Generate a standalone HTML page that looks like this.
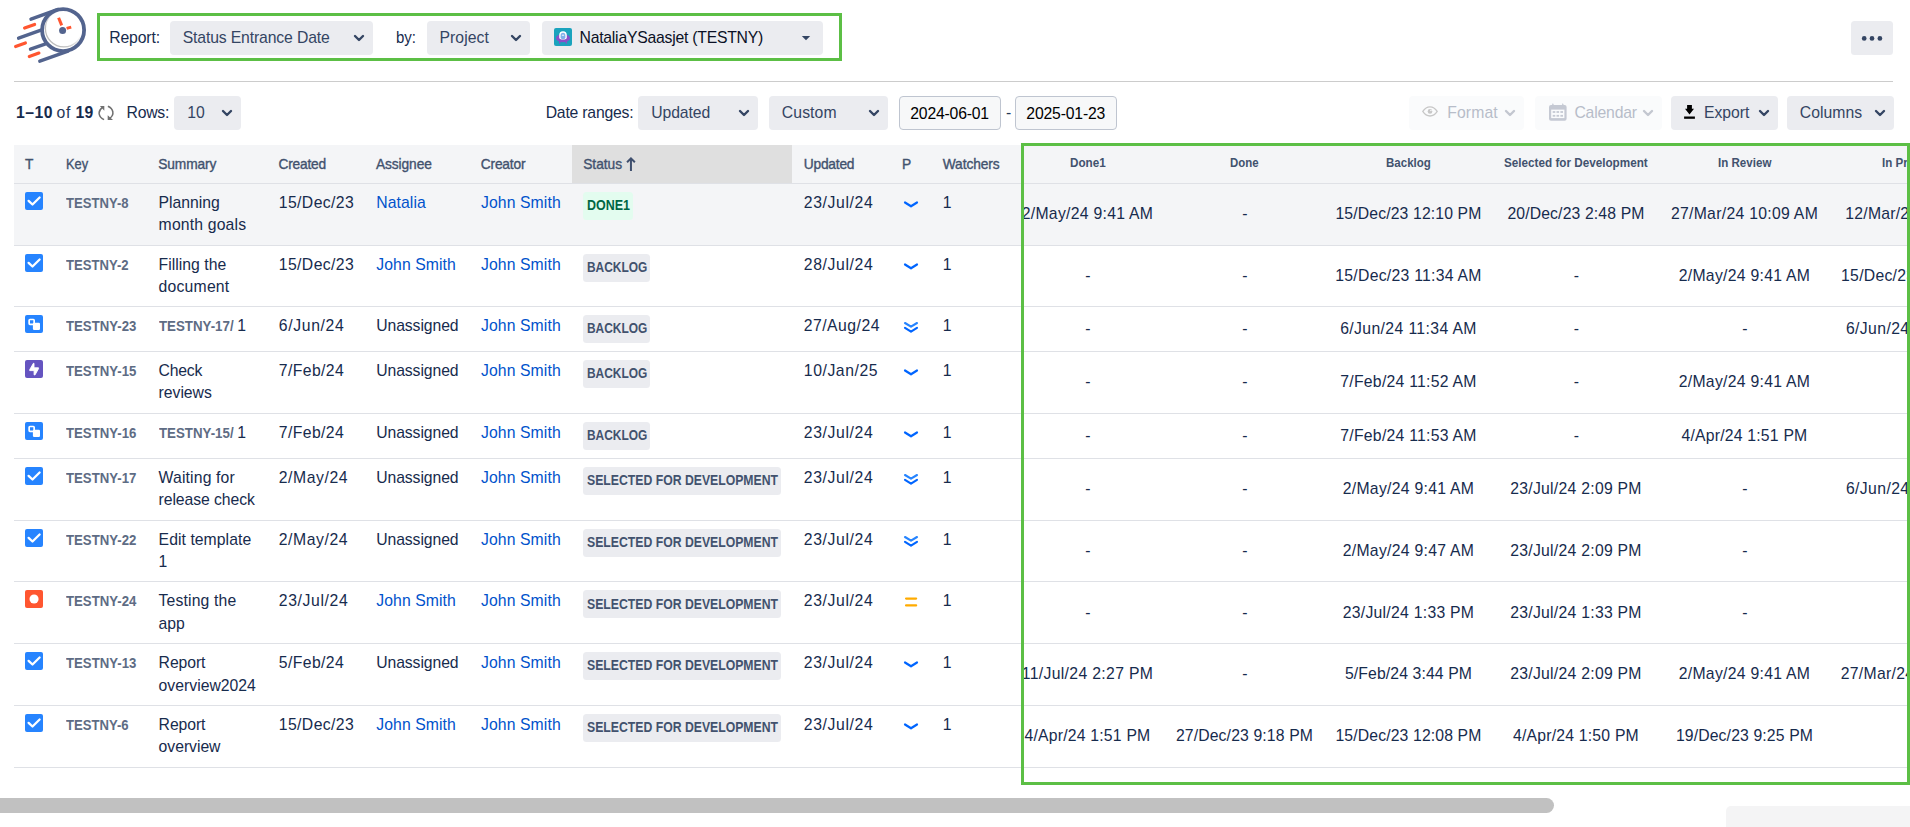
<!DOCTYPE html>
<html lang="en"><head><meta charset="utf-8"><title>Status Entrance Date report</title>
<style>
html,body{margin:0;padding:0;background:#fff;}
body{width:1910px;height:827px;overflow:hidden;position:relative;font-family:"Liberation Sans", sans-serif;}
span{font-family:inherit}
</style></head><body>
<div class="logo">
<svg style="position:absolute;left:0px;top:0px" width="96" height="70" viewBox="0 0 96 70">
<defs><linearGradient id="lg" x1="1" y1="0" x2="0" y2="1"><stop offset="0.35" stop-color="#bdbdbd" stop-opacity="0"/><stop offset="0.75" stop-color="#bdbdbd" stop-opacity="1"/></linearGradient></defs>
<g fill="none" stroke-linecap="round">
<g stroke="#53648e" stroke-width="3.4">
<line x1="31" y1="19.2" x2="58" y2="9.4"/>
<line x1="18.6" y1="38.2" x2="41" y2="30.2"/>
<line x1="30.5" y1="49.2" x2="45" y2="44.2"/>
<line x1="39.8" y1="61.2" x2="68" y2="51.2"/>
</g>
<g stroke="#ff5630" stroke-width="3.2">
<line x1="24.6" y1="28" x2="34.6" y2="24.5"/>
<line x1="15.6" y1="46.5" x2="25.4" y2="43"/>
<line x1="29.3" y1="56.5" x2="38.9" y2="53.1"/>
</g>
<circle cx="63.1" cy="30.05" r="20" fill="#fff" stroke="none"/>
<circle cx="63.9" cy="28.4" r="18.5" stroke="url(#lg)" stroke-width="1.3"/>
<circle cx="63.1" cy="30.05" r="21" stroke="#53648e" stroke-width="3.8"/>
<line x1="58.6" y1="17.8" x2="61.7" y2="25.4" stroke="#ff5630" stroke-width="3" stroke-linecap="butt"/>
<line x1="66.6" y1="28.4" x2="71.2" y2="27.1" stroke="#ff5630" stroke-width="3" stroke-linecap="butt"/>
<circle cx="62.6" cy="30.5" r="3.5" fill="#53648e" stroke="none"/>
</g></svg>
</div>
<div class="toolbar report-selectors">
<div style="position:absolute;left:170px;top:21px;width:203px;height:34px;background:#ebecf0;border-radius:4px;"></div>
<svg style="position:absolute;left:350.5px;top:29.9px" width="16" height="16" viewBox="0 0 16 16"><path d="M4 6.0 L8 10.0 L12 6.0" fill="none" stroke="#344563" stroke-width="2.4" stroke-linecap="round" stroke-linejoin="round"/></svg>
<div style="position:absolute;left:427px;top:21px;width:103px;height:34px;background:#ebecf0;border-radius:4px;"></div>
<svg style="position:absolute;left:508px;top:29.9px" width="16" height="16" viewBox="0 0 16 16"><path d="M4 6.0 L8 10.0 L12 6.0" fill="none" stroke="#344563" stroke-width="2.4" stroke-linecap="round" stroke-linejoin="round"/></svg>
<div style="position:absolute;left:542px;top:21px;width:281px;height:34px;background:#ebecf0;border-radius:4px;"></div>
<svg style="position:absolute;left:554px;top:28.3px" width="18" height="18" viewBox="0 0 18 18"><rect width="18" height="18" rx="2" fill="#1aa3bd"/>
<ellipse cx="9" cy="10.2" rx="7" ry="4" fill="#8a4fc9"/>
<rect x="5" y="13.2" width="1.4" height="2.4" fill="#8a4fc9"/><rect x="11.6" y="13.2" width="1.4" height="2.4" fill="#8a4fc9"/>
<path d="M5.2 9.6 V7 a3.8 3.8 0 0 1 7.6 0 V9.6 a3.8 2 0 0 1 -7.6 0Z" fill="#fff"/>
<path d="M6.6 9.8 V7.4 a2.4 2.6 0 0 1 4.8 0 V9.8 a2.4 1.4 0 0 1 -4.8 0Z" fill="#7fb0ea"/>
<ellipse cx="9" cy="7.3" rx="1.3" ry="0.8" fill="#dfeafb"/></svg>
<svg style="position:absolute;left:800px;top:32px" width="12" height="12" viewBox="0 0 12 12"><path d="M1.8 4 H10.2 L6 8.3Z" fill="#344563"/></svg>
<div style="position:absolute;left:97px;top:13px;width:739px;height:42px;background:transparent;border-radius:0px;border:3px solid #5cbf45;"></div>
<div style="position:absolute;left:1851px;top:21px;width:42px;height:34px;background:#ebecf0;border-radius:3.5px;"></div>
<svg style="position:absolute;left:1858px;top:33px" width="28" height="11" viewBox="0 0 28 11"><circle cx="6.2" cy="5.4" r="2.35" fill="#344563"/><circle cx="14" cy="5.4" r="2.35" fill="#344563"/><circle cx="21.9" cy="5.4" r="2.35" fill="#344563"/></svg>
<div style="position:absolute;left:14px;top:81px;width:1879px;height:1px;background:#cccccc;border-radius:0px;"></div>
<span id="t0" style="position:absolute;white-space:pre;line-height:22px;font-size:15.75px;font-weight:400;color:#172b4d;top:27px;letter-spacing:-0.154px;left:109.30px;">Report:</span>
<span id="t1" style="position:absolute;white-space:pre;line-height:22px;font-size:15.75px;font-weight:400;color:#344563;top:27px;letter-spacing:-0.138px;left:182.70px;">Status Entrance Date</span>
<span id="t2" style="position:absolute;white-space:pre;line-height:22px;font-size:15.75px;font-weight:400;color:#172b4d;top:27px;transform:scaleX(0.9532);transform-origin:0 50%;left:396.20px;">by:</span>
<span id="t3" style="position:absolute;white-space:pre;line-height:22px;font-size:15.75px;font-weight:400;color:#344563;top:27px;letter-spacing:0.085px;left:439.40px;">Project</span>
<span id="t4" style="position:absolute;white-space:pre;line-height:22px;font-size:15.75px;font-weight:400;color:#0a1025;top:27px;letter-spacing:-0.232px;left:579.50px;">NataliaYSaasjet (TESTNY)</span>
</div>
<div class="toolbar table-controls">
<svg style="position:absolute;left:97.5px;top:105px" width="17" height="16" viewBox="0 0 17 16"><g fill="none" stroke="#707070" stroke-width="1.5">
<path d="M6.1 14.6 C0.6 12.4 -0.8 6.2 4.3 2.6"/>
<path d="M9.9 1.2 C15.6 3.6 16.6 9.6 12 13.2"/>
</g>
<path d="M1.9 1.1 H6.3 V5.7Z" fill="#707070"/>
<path d="M15 15 H9.7 V10.3Z" fill="#707070"/></svg>
<div style="position:absolute;left:174px;top:96px;width:67px;height:34px;background:#ebecf0;border-radius:4px;"></div>
<svg style="position:absolute;left:218.8px;top:105.2px" width="16" height="16" viewBox="0 0 16 16"><path d="M4 6.0 L8 10.0 L12 6.0" fill="none" stroke="#344563" stroke-width="2.4" stroke-linecap="round" stroke-linejoin="round"/></svg>
<div style="position:absolute;left:638px;top:96px;width:120px;height:34px;background:#ebecf0;border-radius:4px;"></div>
<svg style="position:absolute;left:735.5px;top:105.2px" width="16" height="16" viewBox="0 0 16 16"><path d="M4 6.0 L8 10.0 L12 6.0" fill="none" stroke="#344563" stroke-width="2.4" stroke-linecap="round" stroke-linejoin="round"/></svg>
<div style="position:absolute;left:769px;top:96px;width:119px;height:34px;background:#ebecf0;border-radius:4px;"></div>
<svg style="position:absolute;left:866px;top:105.2px" width="16" height="16" viewBox="0 0 16 16"><path d="M4 6.0 L8 10.0 L12 6.0" fill="none" stroke="#344563" stroke-width="2.4" stroke-linecap="round" stroke-linejoin="round"/></svg>
<div style="position:absolute;left:899px;top:96px;width:100px;height:32px;background:#f7f8f9;border-radius:4px;border:1px solid #bfc5d0;"></div>
<div style="position:absolute;left:1015px;top:96px;width:100px;height:32px;background:#f7f8f9;border-radius:4px;border:1px solid #bfc5d0;"></div>
<div style="position:absolute;left:1409px;top:96px;width:115px;height:34px;background:#fafbfc;border-radius:4px;"></div>
<svg style="position:absolute;left:1422px;top:106.3px" width="16" height="11" viewBox="0 0 16 11"><path d="M0.8 5.4 C3.4 1.4 6 0.8 8 0.8 C10 0.8 12.6 1.4 15.2 5.4 C12.6 9.4 10 10 8 10 C6 10 3.4 9.4 0.8 5.4Z" fill="none" stroke="#c7c7c7" stroke-width="1.3"/>
<circle cx="8" cy="5.4" r="2.3" fill="#c7c7c7"/><circle cx="8.9" cy="4.5" r="0.8" fill="#fafbfc"/></svg>
<svg style="position:absolute;left:1501.6px;top:105.3px" width="16" height="16" viewBox="0 0 16 16"><path d="M4 6.0 L8 10.0 L12 6.0" fill="none" stroke="#c3c7d0" stroke-width="2.4" stroke-linecap="round" stroke-linejoin="round"/></svg>
<div style="position:absolute;left:1535px;top:96px;width:127px;height:34px;background:#fafbfc;border-radius:4px;"></div>
<svg style="position:absolute;left:1548.6px;top:103px" width="18" height="18" viewBox="0 0 18 18"><path d="M2 2 H3 L3.9 0 L4.8 2 H12.9 L13.8 0 L14.7 2 H15.6 a2 2 0 0 1 2 2 V15.8 a2 2 0 0 1 -2 2 H2 a2 2 0 0 1 -2 -2 V4 a2 2 0 0 1 2 -2Z" fill="#c5c9d3"/>
<rect x="2.2" y="6.6" width="13.2" height="8.5" fill="#fafbfc"/>
<g fill="#c5c9d3"><rect x="3.7" y="8.1" width="2.6" height="1.8"/><rect x="7.5" y="8.1" width="2.6" height="1.8"/><rect x="11.4" y="8.1" width="2.6" height="1.8"/>
<rect x="3.7" y="11.9" width="2.6" height="1.8"/><rect x="7.5" y="11.9" width="2.6" height="1.8"/><rect x="11.4" y="11.9" width="2.6" height="1.8"/></g></svg>
<svg style="position:absolute;left:1640px;top:105.3px" width="16" height="16" viewBox="0 0 16 16"><path d="M4 6.0 L8 10.0 L12 6.0" fill="none" stroke="#c3c7d0" stroke-width="2.4" stroke-linecap="round" stroke-linejoin="round"/></svg>
<div style="position:absolute;left:1671px;top:96px;width:107px;height:34px;background:#ebecf0;border-radius:4px;"></div>
<svg style="position:absolute;left:1684px;top:105.4px" width="11" height="14" viewBox="0 0 11 14"><path d="M3.1 0 H7.9 V3.7 H10 L5.5 9.5 L1 3.7 H3.1Z" fill="#000"/><rect x="0.1" y="11.5" width="10.8" height="2.3" fill="#000"/></svg>
<svg style="position:absolute;left:1755.8px;top:105.1px" width="16" height="16" viewBox="0 0 16 16"><path d="M4 6.0 L8 10.0 L12 6.0" fill="none" stroke="#344563" stroke-width="2.4" stroke-linecap="round" stroke-linejoin="round"/></svg>
<div style="position:absolute;left:1787px;top:96px;width:107px;height:34px;background:#ebecf0;border-radius:4px;"></div>
<svg style="position:absolute;left:1871.8px;top:105.1px" width="16" height="16" viewBox="0 0 16 16"><path d="M4 6.0 L8 10.0 L12 6.0" fill="none" stroke="#344563" stroke-width="2.4" stroke-linecap="round" stroke-linejoin="round"/></svg>
<span id="t5" style="position:absolute;white-space:pre;line-height:22px;font-size:15.75px;font-weight:700;color:#172b4d;top:102px;letter-spacing:0.500px;left:16.10px;">1–10</span>
<span id="t6" style="position:absolute;white-space:pre;line-height:22px;font-size:15.75px;font-weight:400;color:#253858;top:102px;letter-spacing:0.664px;left:56.50px;">of</span>
<span id="t7" style="position:absolute;white-space:pre;line-height:22px;font-size:15.75px;font-weight:700;color:#172b4d;top:102px;letter-spacing:0.273px;left:75.50px;">19</span>
<span id="t8" style="position:absolute;white-space:pre;line-height:22px;font-size:15.75px;font-weight:400;color:#172b4d;top:102px;letter-spacing:-0.259px;left:126.60px;">Rows:</span>
<span id="t9" style="position:absolute;white-space:pre;line-height:22px;font-size:15.75px;font-weight:400;color:#344563;top:102px;letter-spacing:0.094px;left:187.20px;">10</span>
<span id="t10" style="position:absolute;white-space:pre;line-height:22px;font-size:15.75px;font-weight:400;color:#172b4d;top:102px;letter-spacing:-0.203px;left:545.70px;">Date ranges:</span>
<span id="t11" style="position:absolute;white-space:pre;line-height:22px;font-size:15.75px;font-weight:400;color:#344563;top:102px;letter-spacing:-0.094px;left:651.20px;">Updated</span>
<span id="t12" style="position:absolute;white-space:pre;line-height:22px;font-size:15.75px;font-weight:400;color:#344563;top:102px;letter-spacing:0.099px;left:781.80px;">Custom</span>
<span id="t13" style="position:absolute;white-space:pre;line-height:22px;font-size:15.75px;font-weight:400;color:#000;top:103px;letter-spacing:-0.198px;left:910.30px;">2024-06-01</span>
<span id="t14" style="position:absolute;white-space:pre;line-height:22px;font-size:15.75px;font-weight:400;color:#253858;top:102px;left:1005.90px;">-</span>
<span id="t15" style="position:absolute;white-space:pre;line-height:22px;font-size:15.75px;font-weight:400;color:#000;top:103px;letter-spacing:-0.168px;left:1026.30px;">2025-01-23</span>
<span id="t16" style="position:absolute;white-space:pre;line-height:22px;font-size:15.75px;font-weight:400;color:#b7bdc9;top:102px;letter-spacing:0.086px;left:1447.30px;">Format</span>
<span id="t17" style="position:absolute;white-space:pre;line-height:22px;font-size:15.75px;font-weight:400;color:#b7bdc9;top:102px;letter-spacing:-0.178px;left:1574.40px;">Calendar</span>
<span id="t18" style="position:absolute;white-space:pre;line-height:22px;font-size:15.75px;font-weight:400;color:#344563;top:102px;letter-spacing:-0.010px;left:1703.90px;">Export</span>
<span id="t19" style="position:absolute;white-space:pre;line-height:22px;font-size:15.75px;font-weight:400;color:#344563;top:102px;letter-spacing:0.033px;left:1799.80px;">Columns</span>
</div>
<div class="issue-table" role="table">
<div class="thead" role="row">
<div style="position:absolute;left:14px;top:145px;width:1896px;height:38px;background:#f4f5f7;border-radius:0px;"></div>
<div style="position:absolute;left:572px;top:145px;width:220px;height:39px;background:#dfdfdf;border-radius:0px;"></div>
<div style="position:absolute;left:14px;top:184px;width:1896px;height:61px;background:#f4f5f7;border-radius:0px;"></div>
<div style="position:absolute;left:14px;top:183px;width:1896px;height:1px;background:#dfe1e6;border-radius:0px;"></div>
<div style="position:absolute;left:14px;top:245px;width:1896px;height:1px;background:#dfe1e6;border-radius:0px;"></div>
<div style="position:absolute;left:14px;top:306px;width:1896px;height:1px;background:#dfe1e6;border-radius:0px;"></div>
<div style="position:absolute;left:14px;top:351px;width:1896px;height:1px;background:#dfe1e6;border-radius:0px;"></div>
<div style="position:absolute;left:14px;top:413px;width:1896px;height:1px;background:#dfe1e6;border-radius:0px;"></div>
<div style="position:absolute;left:14px;top:458px;width:1896px;height:1px;background:#dfe1e6;border-radius:0px;"></div>
<div style="position:absolute;left:14px;top:520px;width:1896px;height:1px;background:#dfe1e6;border-radius:0px;"></div>
<div style="position:absolute;left:14px;top:581px;width:1896px;height:1px;background:#dfe1e6;border-radius:0px;"></div>
<div style="position:absolute;left:14px;top:643px;width:1896px;height:1px;background:#dfe1e6;border-radius:0px;"></div>
<div style="position:absolute;left:14px;top:705px;width:1896px;height:1px;background:#dfe1e6;border-radius:0px;"></div>
<div style="position:absolute;left:14px;top:767px;width:1896px;height:1px;background:#dfe1e6;border-radius:0px;"></div>
<svg style="position:absolute;left:624px;top:155px" width="14" height="18" viewBox="0 0 14 18"><path d="M6.95 15.9 V3.4 M3.05 7.3 L6.95 3.4 L10.85 7.3" fill="none" stroke="#3f4f6e" stroke-width="2" stroke-linecap="butt" stroke-linejoin="miter"/></svg>
<span id="t20" style="position:absolute;white-space:pre;line-height:22px;font-size:13.75px;font-weight:400;color:#42526e;top:154px;left:25.10px;-webkit-text-stroke:0.35px #42526e;">T</span>
<span id="t21" style="position:absolute;white-space:pre;line-height:22px;font-size:13.75px;font-weight:400;color:#42526e;top:154px;transform:scaleX(0.9334);transform-origin:0 50%;left:65.70px;-webkit-text-stroke:0.35px #42526e;">Key</span>
<span id="t22" style="position:absolute;white-space:pre;line-height:22px;font-size:13.75px;font-weight:400;color:#42526e;top:154px;letter-spacing:-0.121px;left:158.30px;-webkit-text-stroke:0.35px #42526e;">Summary</span>
<span id="t23" style="position:absolute;white-space:pre;line-height:22px;font-size:13.75px;font-weight:400;color:#42526e;top:154px;letter-spacing:-0.230px;left:278.50px;-webkit-text-stroke:0.35px #42526e;">Created</span>
<span id="t24" style="position:absolute;white-space:pre;line-height:22px;font-size:13.75px;font-weight:400;color:#42526e;top:154px;letter-spacing:-0.082px;left:375.90px;-webkit-text-stroke:0.35px #42526e;">Assignee</span>
<span id="t25" style="position:absolute;white-space:pre;line-height:22px;font-size:13.75px;font-weight:400;color:#42526e;top:154px;letter-spacing:-0.158px;left:480.70px;-webkit-text-stroke:0.35px #42526e;">Creator</span>
<span id="t26" style="position:absolute;white-space:pre;line-height:22px;font-size:13.75px;font-weight:400;color:#42526e;top:154px;letter-spacing:-0.013px;left:583.20px;-webkit-text-stroke:0.35px #42526e;">Status</span>
<span id="t27" style="position:absolute;white-space:pre;line-height:22px;font-size:13.75px;font-weight:400;color:#42526e;top:154px;letter-spacing:-0.194px;left:803.70px;-webkit-text-stroke:0.35px #42526e;">Updated</span>
<span id="t28" style="position:absolute;white-space:pre;line-height:22px;font-size:13.75px;font-weight:400;color:#42526e;top:154px;left:902.10px;-webkit-text-stroke:0.35px #42526e;">P</span>
<span id="t29" style="position:absolute;white-space:pre;line-height:22px;font-size:13.75px;font-weight:400;color:#42526e;top:154px;letter-spacing:-0.076px;left:942.70px;-webkit-text-stroke:0.35px #42526e;">Watchers</span>
<span id="t30" style="position:absolute;white-space:pre;line-height:22px;font-size:12.375px;font-weight:700;color:#42526e;top:152px;transform:scaleX(0.9450);transform-origin:0 50%;left:1069.65px;">Done1</span>
<span id="t31" style="position:absolute;white-space:pre;line-height:22px;font-size:12.375px;font-weight:700;color:#42526e;top:152px;transform:scaleX(0.9262);transform-origin:0 50%;left:1230.19px;">Done</span>
<span id="t32" style="position:absolute;white-space:pre;line-height:22px;font-size:12.375px;font-weight:700;color:#42526e;top:152px;transform:scaleX(0.9327);transform-origin:0 50%;left:1386.07px;">Backlog</span>
<span id="t33" style="position:absolute;white-space:pre;line-height:22px;font-size:12.375px;font-weight:700;color:#42526e;top:152px;transform:scaleX(0.9469);transform-origin:0 50%;left:1504.13px;">Selected for Development</span>
<span id="t34" style="position:absolute;white-space:pre;line-height:22px;font-size:12.375px;font-weight:700;color:#42526e;top:152px;transform:scaleX(0.9370);transform-origin:0 50%;left:1717.79px;">In Review</span>
<span id="t35" style="position:absolute;white-space:pre;line-height:22px;font-size:12.375px;font-weight:700;color:#42526e;top:152px;transform:scaleX(0.9373);transform-origin:0 50%;left:1882.42px;">In Progress</span>
</div>
<div class="tr" role="row">
<svg style="position:absolute;left:25px;top:192px" width="18" height="18" viewBox="0 0 18 18"><rect width="18" height="18" rx="2" fill="#2684ff"/><path d="M3.6 8.9 L7.5 12.5 L14.6 5.5" fill="none" stroke="#fff" stroke-width="2.3" stroke-linecap="round" stroke-linejoin="round"/></svg>
<svg style="position:absolute;left:902px;top:197px" width="18" height="14" viewBox="0 0 18 14"><path d="M3 5.5 L9 9.3 L15 5.5" fill="none" stroke="#0065ff" stroke-width="2.2" stroke-linecap="round" stroke-linejoin="round"/></svg>
<div style="position:absolute;left:583px;top:192px;width:49.7px;height:27.5px;background:#e3fcef;border-radius:3.5px"></div>
<span id="t36" style="position:absolute;white-space:pre;line-height:22px;font-size:14px;font-weight:700;color:#5e6c84;top:192px;transform:scaleX(0.9360);transform-origin:0 50%;left:65.70px;">TESTNY-8</span>
<span id="t37" style="position:absolute;white-space:pre;line-height:22px;font-size:15.75px;font-weight:400;color:#172b4d;top:192px;letter-spacing:-0.025px;left:158.60px;">Planning</span>
<span id="t38" style="position:absolute;white-space:pre;line-height:22px;font-size:15.75px;font-weight:400;color:#172b4d;top:214px;letter-spacing:0.162px;left:158.60px;">month goals</span>
<span id="t39" style="position:absolute;white-space:pre;line-height:22px;font-size:15.75px;font-weight:400;color:#172b4d;top:192px;letter-spacing:0.392px;left:278.80px;">15/Dec/23</span>
<span id="t40" style="position:absolute;white-space:pre;line-height:22px;font-size:15.75px;font-weight:400;color:#0052cc;top:192px;letter-spacing:0.103px;left:376.20px;">Natalia</span>
<span id="t41" style="position:absolute;white-space:pre;line-height:22px;font-size:15.75px;font-weight:400;color:#0052cc;top:192px;letter-spacing:0.098px;left:481.00px;">John Smith</span>
<span id="t42" style="position:absolute;white-space:pre;line-height:22px;font-size:14px;font-weight:700;color:#006644;top:194px;transform:scaleX(0.8905);transform-origin:0 50%;left:586.90px;">DONE1</span>
<span id="t43" style="position:absolute;white-space:pre;line-height:22px;font-size:15.75px;font-weight:400;color:#172b4d;top:192px;letter-spacing:0.630px;left:803.80px;">23/Jul/24</span>
<span id="t44" style="position:absolute;white-space:pre;line-height:22px;font-size:15.75px;font-weight:400;color:#172b4d;top:192px;left:942.80px;">1</span>
<span id="t45" style="position:absolute;white-space:pre;line-height:22px;font-size:15.75px;font-weight:400;color:#172b4d;top:203px;letter-spacing:0.279px;left:1021.79px;">2/May/24 9:41 AM</span>
<span id="t46" style="position:absolute;white-space:pre;line-height:22px;font-size:15.75px;font-weight:400;color:#172b4d;top:203px;left:1242.32px;">-</span>
<span id="t47" style="position:absolute;white-space:pre;line-height:22px;font-size:15.75px;font-weight:400;color:#172b4d;top:203px;letter-spacing:0.137px;left:1335.47px;">15/Dec/23 12:10 PM</span>
<span id="t48" style="position:absolute;white-space:pre;line-height:22px;font-size:15.75px;font-weight:400;color:#172b4d;top:203px;letter-spacing:0.140px;left:1507.39px;">20/Dec/23 2:48 PM</span>
<span id="t49" style="position:absolute;white-space:pre;line-height:22px;font-size:15.75px;font-weight:400;color:#172b4d;top:203px;letter-spacing:0.293px;left:1670.94px;">27/Mar/24 10:09 AM</span>
<span id="t50" style="position:absolute;white-space:pre;line-height:22px;font-size:15.75px;font-weight:400;color:#172b4d;top:203px;letter-spacing:0.234px;left:1845.33px;">12/Mar/24 2:09 PM</span>
</div>
<div class="tr" role="row">
<svg style="position:absolute;left:25px;top:254px" width="18" height="18" viewBox="0 0 18 18"><rect width="18" height="18" rx="2" fill="#2684ff"/><path d="M3.6 8.9 L7.5 12.5 L14.6 5.5" fill="none" stroke="#fff" stroke-width="2.3" stroke-linecap="round" stroke-linejoin="round"/></svg>
<svg style="position:absolute;left:902px;top:259px" width="18" height="14" viewBox="0 0 18 14"><path d="M3 5.5 L9 9.3 L15 5.5" fill="none" stroke="#0065ff" stroke-width="2.2" stroke-linecap="round" stroke-linejoin="round"/></svg>
<div style="position:absolute;left:583px;top:254px;width:67.1px;height:27.5px;background:#ebecf0;border-radius:3.5px"></div>
<span id="t51" style="position:absolute;white-space:pre;line-height:22px;font-size:14px;font-weight:700;color:#5e6c84;top:254px;transform:scaleX(0.9360);transform-origin:0 50%;left:65.70px;">TESTNY-2</span>
<span id="t52" style="position:absolute;white-space:pre;line-height:22px;font-size:15.75px;font-weight:400;color:#172b4d;top:254px;letter-spacing:0.021px;left:158.60px;">Filling the</span>
<span id="t53" style="position:absolute;white-space:pre;line-height:22px;font-size:15.75px;font-weight:400;color:#172b4d;top:276px;letter-spacing:0.205px;left:158.60px;">document</span>
<span id="t54" style="position:absolute;white-space:pre;line-height:22px;font-size:15.75px;font-weight:400;color:#172b4d;top:254px;letter-spacing:0.392px;left:278.80px;">15/Dec/23</span>
<span id="t55" style="position:absolute;white-space:pre;line-height:22px;font-size:15.75px;font-weight:400;color:#0052cc;top:254px;letter-spacing:0.098px;left:376.20px;">John Smith</span>
<span id="t56" style="position:absolute;white-space:pre;line-height:22px;font-size:15.75px;font-weight:400;color:#0052cc;top:254px;letter-spacing:0.098px;left:481.00px;">John Smith</span>
<span id="t57" style="position:absolute;white-space:pre;line-height:22px;font-size:14px;font-weight:700;color:#42526e;top:256px;transform:scaleX(0.8530);transform-origin:0 50%;left:586.90px;">BACKLOG</span>
<span id="t58" style="position:absolute;white-space:pre;line-height:22px;font-size:15.75px;font-weight:400;color:#172b4d;top:254px;letter-spacing:0.630px;left:803.80px;">28/Jul/24</span>
<span id="t59" style="position:absolute;white-space:pre;line-height:22px;font-size:15.75px;font-weight:400;color:#172b4d;top:254px;left:942.80px;">1</span>
<span id="t60" style="position:absolute;white-space:pre;line-height:22px;font-size:15.75px;font-weight:400;color:#172b4d;top:265px;left:1085.32px;">-</span>
<span id="t61" style="position:absolute;white-space:pre;line-height:22px;font-size:15.75px;font-weight:400;color:#172b4d;top:265px;left:1242.32px;">-</span>
<span id="t62" style="position:absolute;white-space:pre;line-height:22px;font-size:15.75px;font-weight:400;color:#172b4d;top:265px;letter-spacing:0.269px;left:1335.30px;">15/Dec/23 11:34 AM</span>
<span id="t63" style="position:absolute;white-space:pre;line-height:22px;font-size:15.75px;font-weight:400;color:#172b4d;top:265px;left:1573.82px;">-</span>
<span id="t64" style="position:absolute;white-space:pre;line-height:22px;font-size:15.75px;font-weight:400;color:#172b4d;top:265px;letter-spacing:0.279px;left:1678.79px;">2/May/24 9:41 AM</span>
<span id="t65" style="position:absolute;white-space:pre;line-height:22px;font-size:15.75px;font-weight:400;color:#172b4d;top:265px;letter-spacing:0.269px;left:1841.10px;">15/Dec/23 11:34 AM</span>
</div>
<div class="tr" role="row">
<svg style="position:absolute;left:25px;top:315px" width="18" height="18" viewBox="0 0 18 18"><rect width="18" height="18" rx="2" fill="#2684ff"/><rect x="4.15" y="4.5" width="5" height="4.8" rx="0.8" fill="none" stroke="#fff" stroke-width="1.7"/><rect x="7.9" y="7.7" width="7.1" height="7.3" rx="1.2" fill="#fff"/></svg>
<svg style="position:absolute;left:902px;top:320px" width="18" height="14" viewBox="0 0 18 14"><path d="M3 3 L9 6.7 L15 3" fill="none" stroke="#2684ff" stroke-width="2.1" stroke-linecap="round" stroke-linejoin="round"/><path d="M3 7.8 L9 11.6 L15 7.8" fill="none" stroke="#0065ff" stroke-width="2.1" stroke-linecap="round" stroke-linejoin="round"/></svg>
<div style="position:absolute;left:583px;top:315px;width:67.1px;height:27.5px;background:#ebecf0;border-radius:3.5px"></div>
<span id="t66" style="position:absolute;white-space:pre;line-height:22px;font-size:14px;font-weight:700;color:#5e6c84;top:315px;transform:scaleX(0.9419);transform-origin:0 50%;left:65.70px;">TESTNY-23</span>
<span id="t67" style="position:absolute;white-space:pre;line-height:22px;font-size:14px;font-weight:700;color:#5e6c84;top:315px;transform:scaleX(0.9492);transform-origin:0 50%;left:158.60px;">TESTNY-17/</span>
<span id="t68" style="position:absolute;white-space:pre;line-height:22px;font-size:15.75px;font-weight:400;color:#172b4d;top:315px;left:237.20px;">1</span>
<span id="t69" style="position:absolute;white-space:pre;line-height:22px;font-size:15.75px;font-weight:400;color:#172b4d;top:315px;letter-spacing:0.648px;left:278.80px;">6/Jun/24</span>
<span id="t70" style="position:absolute;white-space:pre;line-height:22px;font-size:15.75px;font-weight:400;color:#172b4d;top:315px;letter-spacing:-0.084px;left:376.20px;">Unassigned</span>
<span id="t71" style="position:absolute;white-space:pre;line-height:22px;font-size:15.75px;font-weight:400;color:#0052cc;top:315px;letter-spacing:0.098px;left:481.00px;">John Smith</span>
<span id="t72" style="position:absolute;white-space:pre;line-height:22px;font-size:14px;font-weight:700;color:#42526e;top:317px;transform:scaleX(0.8530);transform-origin:0 50%;left:586.90px;">BACKLOG</span>
<span id="t73" style="position:absolute;white-space:pre;line-height:22px;font-size:15.75px;font-weight:400;color:#172b4d;top:315px;letter-spacing:0.477px;left:803.80px;">27/Aug/24</span>
<span id="t74" style="position:absolute;white-space:pre;line-height:22px;font-size:15.75px;font-weight:400;color:#172b4d;top:315px;left:942.80px;">1</span>
<span id="t75" style="position:absolute;white-space:pre;line-height:22px;font-size:15.75px;font-weight:400;color:#172b4d;top:318px;left:1085.32px;">-</span>
<span id="t76" style="position:absolute;white-space:pre;line-height:22px;font-size:15.75px;font-weight:400;color:#172b4d;top:318px;left:1242.32px;">-</span>
<span id="t77" style="position:absolute;white-space:pre;line-height:22px;font-size:15.75px;font-weight:400;color:#172b4d;top:318px;letter-spacing:0.382px;left:1340.16px;">6/Jun/24 11:34 AM</span>
<span id="t78" style="position:absolute;white-space:pre;line-height:22px;font-size:15.75px;font-weight:400;color:#172b4d;top:318px;left:1573.82px;">-</span>
<span id="t79" style="position:absolute;white-space:pre;line-height:22px;font-size:15.75px;font-weight:400;color:#172b4d;top:318px;left:1742.32px;">-</span>
<span id="t80" style="position:absolute;white-space:pre;line-height:22px;font-size:15.75px;font-weight:400;color:#172b4d;top:318px;letter-spacing:0.382px;left:1845.96px;">6/Jun/24 11:34 AM</span>
</div>
<div class="tr" role="row">
<svg style="position:absolute;left:25px;top:360px" width="18" height="18" viewBox="0 0 18 18"><rect width="18" height="18" rx="2" fill="#6554c0"/><path d="M8.4 3.3 L9 3.3 L9 7.8 L13.5 7.8 L13.5 8.7 L10 14.9 L9.1 14.9 L9.1 10.6 L4.7 10.6 L4.7 9.7 Z" fill="#fff" stroke="#fff" stroke-width="0.9" stroke-linejoin="round"/></svg>
<svg style="position:absolute;left:902px;top:365px" width="18" height="14" viewBox="0 0 18 14"><path d="M3 5.5 L9 9.3 L15 5.5" fill="none" stroke="#0065ff" stroke-width="2.2" stroke-linecap="round" stroke-linejoin="round"/></svg>
<div style="position:absolute;left:583px;top:360px;width:67.1px;height:27.5px;background:#ebecf0;border-radius:3.5px"></div>
<span id="t81" style="position:absolute;white-space:pre;line-height:22px;font-size:14px;font-weight:700;color:#5e6c84;top:360px;transform:scaleX(0.9419);transform-origin:0 50%;left:65.70px;">TESTNY-15</span>
<span id="t82" style="position:absolute;white-space:pre;line-height:22px;font-size:15.75px;font-weight:400;color:#172b4d;top:360px;letter-spacing:-0.228px;left:158.60px;">Check</span>
<span id="t83" style="position:absolute;white-space:pre;line-height:22px;font-size:15.75px;font-weight:400;color:#172b4d;top:382px;letter-spacing:-0.025px;left:158.60px;">reviews</span>
<span id="t84" style="position:absolute;white-space:pre;line-height:22px;font-size:15.75px;font-weight:400;color:#172b4d;top:360px;letter-spacing:0.391px;left:278.80px;">7/Feb/24</span>
<span id="t85" style="position:absolute;white-space:pre;line-height:22px;font-size:15.75px;font-weight:400;color:#172b4d;top:360px;letter-spacing:-0.084px;left:376.20px;">Unassigned</span>
<span id="t86" style="position:absolute;white-space:pre;line-height:22px;font-size:15.75px;font-weight:400;color:#0052cc;top:360px;letter-spacing:0.098px;left:481.00px;">John Smith</span>
<span id="t87" style="position:absolute;white-space:pre;line-height:22px;font-size:14px;font-weight:700;color:#42526e;top:362px;transform:scaleX(0.8530);transform-origin:0 50%;left:586.90px;">BACKLOG</span>
<span id="t88" style="position:absolute;white-space:pre;line-height:22px;font-size:15.75px;font-weight:400;color:#172b4d;top:360px;letter-spacing:0.575px;left:803.80px;">10/Jan/25</span>
<span id="t89" style="position:absolute;white-space:pre;line-height:22px;font-size:15.75px;font-weight:400;color:#172b4d;top:360px;left:942.80px;">1</span>
<span id="t90" style="position:absolute;white-space:pre;line-height:22px;font-size:15.75px;font-weight:400;color:#172b4d;top:371px;left:1085.32px;">-</span>
<span id="t91" style="position:absolute;white-space:pre;line-height:22px;font-size:15.75px;font-weight:400;color:#172b4d;top:371px;left:1242.32px;">-</span>
<span id="t92" style="position:absolute;white-space:pre;line-height:22px;font-size:15.75px;font-weight:400;color:#172b4d;top:371px;letter-spacing:0.261px;left:1340.32px;">7/Feb/24 11:52 AM</span>
<span id="t93" style="position:absolute;white-space:pre;line-height:22px;font-size:15.75px;font-weight:400;color:#172b4d;top:371px;left:1573.82px;">-</span>
<span id="t94" style="position:absolute;white-space:pre;line-height:22px;font-size:15.75px;font-weight:400;color:#172b4d;top:371px;letter-spacing:0.279px;left:1678.79px;">2/May/24 9:41 AM</span>
</div>
<div class="tr" role="row">
<svg style="position:absolute;left:25px;top:422px" width="18" height="18" viewBox="0 0 18 18"><rect width="18" height="18" rx="2" fill="#2684ff"/><rect x="4.15" y="4.5" width="5" height="4.8" rx="0.8" fill="none" stroke="#fff" stroke-width="1.7"/><rect x="7.9" y="7.7" width="7.1" height="7.3" rx="1.2" fill="#fff"/></svg>
<svg style="position:absolute;left:902px;top:427px" width="18" height="14" viewBox="0 0 18 14"><path d="M3 5.5 L9 9.3 L15 5.5" fill="none" stroke="#0065ff" stroke-width="2.2" stroke-linecap="round" stroke-linejoin="round"/></svg>
<div style="position:absolute;left:583px;top:422px;width:67.1px;height:27.5px;background:#ebecf0;border-radius:3.5px"></div>
<span id="t95" style="position:absolute;white-space:pre;line-height:22px;font-size:14px;font-weight:700;color:#5e6c84;top:422px;transform:scaleX(0.9419);transform-origin:0 50%;left:65.70px;">TESTNY-16</span>
<span id="t96" style="position:absolute;white-space:pre;line-height:22px;font-size:14px;font-weight:700;color:#5e6c84;top:422px;transform:scaleX(0.9492);transform-origin:0 50%;left:158.60px;">TESTNY-15/</span>
<span id="t97" style="position:absolute;white-space:pre;line-height:22px;font-size:15.75px;font-weight:400;color:#172b4d;top:422px;left:237.20px;">1</span>
<span id="t98" style="position:absolute;white-space:pre;line-height:22px;font-size:15.75px;font-weight:400;color:#172b4d;top:422px;letter-spacing:0.391px;left:278.80px;">7/Feb/24</span>
<span id="t99" style="position:absolute;white-space:pre;line-height:22px;font-size:15.75px;font-weight:400;color:#172b4d;top:422px;letter-spacing:-0.084px;left:376.20px;">Unassigned</span>
<span id="t100" style="position:absolute;white-space:pre;line-height:22px;font-size:15.75px;font-weight:400;color:#0052cc;top:422px;letter-spacing:0.098px;left:481.00px;">John Smith</span>
<span id="t101" style="position:absolute;white-space:pre;line-height:22px;font-size:14px;font-weight:700;color:#42526e;top:424px;transform:scaleX(0.8530);transform-origin:0 50%;left:586.90px;">BACKLOG</span>
<span id="t102" style="position:absolute;white-space:pre;line-height:22px;font-size:15.75px;font-weight:400;color:#172b4d;top:422px;letter-spacing:0.630px;left:803.80px;">23/Jul/24</span>
<span id="t103" style="position:absolute;white-space:pre;line-height:22px;font-size:15.75px;font-weight:400;color:#172b4d;top:422px;left:942.80px;">1</span>
<span id="t104" style="position:absolute;white-space:pre;line-height:22px;font-size:15.75px;font-weight:400;color:#172b4d;top:425px;left:1085.32px;">-</span>
<span id="t105" style="position:absolute;white-space:pre;line-height:22px;font-size:15.75px;font-weight:400;color:#172b4d;top:425px;left:1242.32px;">-</span>
<span id="t106" style="position:absolute;white-space:pre;line-height:22px;font-size:15.75px;font-weight:400;color:#172b4d;top:425px;letter-spacing:0.261px;left:1340.32px;">7/Feb/24 11:53 AM</span>
<span id="t107" style="position:absolute;white-space:pre;line-height:22px;font-size:15.75px;font-weight:400;color:#172b4d;top:425px;left:1573.82px;">-</span>
<span id="t108" style="position:absolute;white-space:pre;line-height:22px;font-size:15.75px;font-weight:400;color:#172b4d;top:425px;letter-spacing:0.207px;left:1681.55px;">4/Apr/24 1:51 PM</span>
</div>
<div class="tr" role="row">
<svg style="position:absolute;left:25px;top:467px" width="18" height="18" viewBox="0 0 18 18"><rect width="18" height="18" rx="2" fill="#2684ff"/><path d="M3.6 8.9 L7.5 12.5 L14.6 5.5" fill="none" stroke="#fff" stroke-width="2.3" stroke-linecap="round" stroke-linejoin="round"/></svg>
<svg style="position:absolute;left:902px;top:472px" width="18" height="14" viewBox="0 0 18 14"><path d="M3 3 L9 6.7 L15 3" fill="none" stroke="#2684ff" stroke-width="2.1" stroke-linecap="round" stroke-linejoin="round"/><path d="M3 7.8 L9 11.6 L15 7.8" fill="none" stroke="#0065ff" stroke-width="2.1" stroke-linecap="round" stroke-linejoin="round"/></svg>
<div style="position:absolute;left:583px;top:467px;width:197.7px;height:27.5px;background:#ebecf0;border-radius:3.5px"></div>
<span id="t109" style="position:absolute;white-space:pre;line-height:22px;font-size:14px;font-weight:700;color:#5e6c84;top:467px;transform:scaleX(0.9419);transform-origin:0 50%;left:65.70px;">TESTNY-17</span>
<span id="t110" style="position:absolute;white-space:pre;line-height:22px;font-size:15.75px;font-weight:400;color:#172b4d;top:467px;letter-spacing:0.149px;left:158.60px;">Waiting for</span>
<span id="t111" style="position:absolute;white-space:pre;line-height:22px;font-size:15.75px;font-weight:400;color:#172b4d;top:489px;letter-spacing:-0.077px;left:158.60px;">release check</span>
<span id="t112" style="position:absolute;white-space:pre;line-height:22px;font-size:15.75px;font-weight:400;color:#172b4d;top:467px;letter-spacing:0.553px;left:278.80px;">2/May/24</span>
<span id="t113" style="position:absolute;white-space:pre;line-height:22px;font-size:15.75px;font-weight:400;color:#172b4d;top:467px;letter-spacing:-0.084px;left:376.20px;">Unassigned</span>
<span id="t114" style="position:absolute;white-space:pre;line-height:22px;font-size:15.75px;font-weight:400;color:#0052cc;top:467px;letter-spacing:0.098px;left:481.00px;">John Smith</span>
<span id="t115" style="position:absolute;white-space:pre;line-height:22px;font-size:14px;font-weight:700;color:#42526e;top:469px;transform:scaleX(0.8740);transform-origin:0 50%;left:586.90px;">SELECTED FOR DEVELOPMENT</span>
<span id="t116" style="position:absolute;white-space:pre;line-height:22px;font-size:15.75px;font-weight:400;color:#172b4d;top:467px;letter-spacing:0.630px;left:803.80px;">23/Jul/24</span>
<span id="t117" style="position:absolute;white-space:pre;line-height:22px;font-size:15.75px;font-weight:400;color:#172b4d;top:467px;left:942.80px;">1</span>
<span id="t118" style="position:absolute;white-space:pre;line-height:22px;font-size:15.75px;font-weight:400;color:#172b4d;top:478px;left:1085.32px;">-</span>
<span id="t119" style="position:absolute;white-space:pre;line-height:22px;font-size:15.75px;font-weight:400;color:#172b4d;top:478px;left:1242.32px;">-</span>
<span id="t120" style="position:absolute;white-space:pre;line-height:22px;font-size:15.75px;font-weight:400;color:#172b4d;top:478px;letter-spacing:0.279px;left:1342.79px;">2/May/24 9:41 AM</span>
<span id="t121" style="position:absolute;white-space:pre;line-height:22px;font-size:15.75px;font-weight:400;color:#172b4d;top:478px;letter-spacing:0.266px;left:1510.26px;">23/Jul/24 2:09 PM</span>
<span id="t122" style="position:absolute;white-space:pre;line-height:22px;font-size:15.75px;font-weight:400;color:#172b4d;top:478px;left:1742.32px;">-</span>
<span id="t123" style="position:absolute;white-space:pre;line-height:22px;font-size:15.75px;font-weight:400;color:#172b4d;top:478px;letter-spacing:0.382px;left:1845.96px;">6/Jun/24 11:34 AM</span>
</div>
<div class="tr" role="row">
<svg style="position:absolute;left:25px;top:529px" width="18" height="18" viewBox="0 0 18 18"><rect width="18" height="18" rx="2" fill="#2684ff"/><path d="M3.6 8.9 L7.5 12.5 L14.6 5.5" fill="none" stroke="#fff" stroke-width="2.3" stroke-linecap="round" stroke-linejoin="round"/></svg>
<svg style="position:absolute;left:902px;top:534px" width="18" height="14" viewBox="0 0 18 14"><path d="M3 3 L9 6.7 L15 3" fill="none" stroke="#2684ff" stroke-width="2.1" stroke-linecap="round" stroke-linejoin="round"/><path d="M3 7.8 L9 11.6 L15 7.8" fill="none" stroke="#0065ff" stroke-width="2.1" stroke-linecap="round" stroke-linejoin="round"/></svg>
<div style="position:absolute;left:583px;top:529px;width:197.7px;height:27.5px;background:#ebecf0;border-radius:3.5px"></div>
<span id="t124" style="position:absolute;white-space:pre;line-height:22px;font-size:14px;font-weight:700;color:#5e6c84;top:529px;transform:scaleX(0.9419);transform-origin:0 50%;left:65.70px;">TESTNY-22</span>
<span id="t125" style="position:absolute;white-space:pre;line-height:22px;font-size:15.75px;font-weight:400;color:#172b4d;top:529px;letter-spacing:0.054px;left:158.60px;">Edit template</span>
<span id="t126" style="position:absolute;white-space:pre;line-height:22px;font-size:15.75px;font-weight:400;color:#172b4d;top:551px;left:158.60px;">1</span>
<span id="t127" style="position:absolute;white-space:pre;line-height:22px;font-size:15.75px;font-weight:400;color:#172b4d;top:529px;letter-spacing:0.553px;left:278.80px;">2/May/24</span>
<span id="t128" style="position:absolute;white-space:pre;line-height:22px;font-size:15.75px;font-weight:400;color:#172b4d;top:529px;letter-spacing:-0.084px;left:376.20px;">Unassigned</span>
<span id="t129" style="position:absolute;white-space:pre;line-height:22px;font-size:15.75px;font-weight:400;color:#0052cc;top:529px;letter-spacing:0.098px;left:481.00px;">John Smith</span>
<span id="t130" style="position:absolute;white-space:pre;line-height:22px;font-size:14px;font-weight:700;color:#42526e;top:531px;transform:scaleX(0.8740);transform-origin:0 50%;left:586.90px;">SELECTED FOR DEVELOPMENT</span>
<span id="t131" style="position:absolute;white-space:pre;line-height:22px;font-size:15.75px;font-weight:400;color:#172b4d;top:529px;letter-spacing:0.630px;left:803.80px;">23/Jul/24</span>
<span id="t132" style="position:absolute;white-space:pre;line-height:22px;font-size:15.75px;font-weight:400;color:#172b4d;top:529px;left:942.80px;">1</span>
<span id="t133" style="position:absolute;white-space:pre;line-height:22px;font-size:15.75px;font-weight:400;color:#172b4d;top:540px;left:1085.32px;">-</span>
<span id="t134" style="position:absolute;white-space:pre;line-height:22px;font-size:15.75px;font-weight:400;color:#172b4d;top:540px;left:1242.32px;">-</span>
<span id="t135" style="position:absolute;white-space:pre;line-height:22px;font-size:15.75px;font-weight:400;color:#172b4d;top:540px;letter-spacing:0.279px;left:1342.79px;">2/May/24 9:47 AM</span>
<span id="t136" style="position:absolute;white-space:pre;line-height:22px;font-size:15.75px;font-weight:400;color:#172b4d;top:540px;letter-spacing:0.266px;left:1510.26px;">23/Jul/24 2:09 PM</span>
<span id="t137" style="position:absolute;white-space:pre;line-height:22px;font-size:15.75px;font-weight:400;color:#172b4d;top:540px;left:1742.32px;">-</span>
</div>
<div class="tr" role="row">
<svg style="position:absolute;left:25px;top:590px" width="18" height="18" viewBox="0 0 18 18"><rect width="18" height="18" rx="2" fill="#ff5630"/><circle cx="9.05" cy="9.05" r="4.55" fill="#fff"/></svg>
<svg style="position:absolute;left:902px;top:595px" width="18" height="14" viewBox="0 0 18 14"><path d="M4.1 3.6 H14.1 M4.1 10.4 H14.1" fill="none" stroke="#ffab00" stroke-width="2.3" stroke-linecap="round"/></svg>
<div style="position:absolute;left:583px;top:590px;width:197.7px;height:27.5px;background:#ebecf0;border-radius:3.5px"></div>
<span id="t138" style="position:absolute;white-space:pre;line-height:22px;font-size:14px;font-weight:700;color:#5e6c84;top:590px;transform:scaleX(0.9419);transform-origin:0 50%;left:65.70px;">TESTNY-24</span>
<span id="t139" style="position:absolute;white-space:pre;line-height:22px;font-size:15.75px;font-weight:400;color:#172b4d;top:590px;letter-spacing:0.141px;left:158.60px;">Testing the</span>
<span id="t140" style="position:absolute;white-space:pre;line-height:22px;font-size:15.75px;font-weight:400;color:#172b4d;top:613px;letter-spacing:-0.005px;left:158.60px;">app</span>
<span id="t141" style="position:absolute;white-space:pre;line-height:22px;font-size:15.75px;font-weight:400;color:#172b4d;top:590px;letter-spacing:0.630px;left:278.80px;">23/Jul/24</span>
<span id="t142" style="position:absolute;white-space:pre;line-height:22px;font-size:15.75px;font-weight:400;color:#0052cc;top:590px;letter-spacing:0.098px;left:376.20px;">John Smith</span>
<span id="t143" style="position:absolute;white-space:pre;line-height:22px;font-size:15.75px;font-weight:400;color:#0052cc;top:590px;letter-spacing:0.098px;left:481.00px;">John Smith</span>
<span id="t144" style="position:absolute;white-space:pre;line-height:22px;font-size:14px;font-weight:700;color:#42526e;top:593px;transform:scaleX(0.8740);transform-origin:0 50%;left:586.90px;">SELECTED FOR DEVELOPMENT</span>
<span id="t145" style="position:absolute;white-space:pre;line-height:22px;font-size:15.75px;font-weight:400;color:#172b4d;top:590px;letter-spacing:0.630px;left:803.80px;">23/Jul/24</span>
<span id="t146" style="position:absolute;white-space:pre;line-height:22px;font-size:15.75px;font-weight:400;color:#172b4d;top:590px;left:942.80px;">1</span>
<span id="t147" style="position:absolute;white-space:pre;line-height:22px;font-size:15.75px;font-weight:400;color:#172b4d;top:602px;left:1085.32px;">-</span>
<span id="t148" style="position:absolute;white-space:pre;line-height:22px;font-size:15.75px;font-weight:400;color:#172b4d;top:602px;left:1242.32px;">-</span>
<span id="t149" style="position:absolute;white-space:pre;line-height:22px;font-size:15.75px;font-weight:400;color:#172b4d;top:602px;letter-spacing:0.266px;left:1342.76px;">23/Jul/24 1:33 PM</span>
<span id="t150" style="position:absolute;white-space:pre;line-height:22px;font-size:15.75px;font-weight:400;color:#172b4d;top:602px;letter-spacing:0.266px;left:1510.26px;">23/Jul/24 1:33 PM</span>
<span id="t151" style="position:absolute;white-space:pre;line-height:22px;font-size:15.75px;font-weight:400;color:#172b4d;top:602px;left:1742.32px;">-</span>
</div>
<div class="tr" role="row">
<svg style="position:absolute;left:25px;top:652px" width="18" height="18" viewBox="0 0 18 18"><rect width="18" height="18" rx="2" fill="#2684ff"/><path d="M3.6 8.9 L7.5 12.5 L14.6 5.5" fill="none" stroke="#fff" stroke-width="2.3" stroke-linecap="round" stroke-linejoin="round"/></svg>
<svg style="position:absolute;left:902px;top:657px" width="18" height="14" viewBox="0 0 18 14"><path d="M3 5.5 L9 9.3 L15 5.5" fill="none" stroke="#0065ff" stroke-width="2.2" stroke-linecap="round" stroke-linejoin="round"/></svg>
<div style="position:absolute;left:583px;top:652px;width:197.7px;height:27.5px;background:#ebecf0;border-radius:3.5px"></div>
<span id="t152" style="position:absolute;white-space:pre;line-height:22px;font-size:14px;font-weight:700;color:#5e6c84;top:652px;transform:scaleX(0.9419);transform-origin:0 50%;left:65.70px;">TESTNY-13</span>
<span id="t153" style="position:absolute;white-space:pre;line-height:22px;font-size:15.75px;font-weight:400;color:#172b4d;top:652px;letter-spacing:-0.086px;left:158.60px;">Report</span>
<span id="t154" style="position:absolute;white-space:pre;line-height:22px;font-size:15.75px;font-weight:400;color:#172b4d;top:675px;letter-spacing:0.008px;left:158.60px;">overview2024</span>
<span id="t155" style="position:absolute;white-space:pre;line-height:22px;font-size:15.75px;font-weight:400;color:#172b4d;top:652px;letter-spacing:0.391px;left:278.80px;">5/Feb/24</span>
<span id="t156" style="position:absolute;white-space:pre;line-height:22px;font-size:15.75px;font-weight:400;color:#172b4d;top:652px;letter-spacing:-0.084px;left:376.20px;">Unassigned</span>
<span id="t157" style="position:absolute;white-space:pre;line-height:22px;font-size:15.75px;font-weight:400;color:#0052cc;top:652px;letter-spacing:0.098px;left:481.00px;">John Smith</span>
<span id="t158" style="position:absolute;white-space:pre;line-height:22px;font-size:14px;font-weight:700;color:#42526e;top:654px;transform:scaleX(0.8740);transform-origin:0 50%;left:586.90px;">SELECTED FOR DEVELOPMENT</span>
<span id="t159" style="position:absolute;white-space:pre;line-height:22px;font-size:15.75px;font-weight:400;color:#172b4d;top:652px;letter-spacing:0.630px;left:803.80px;">23/Jul/24</span>
<span id="t160" style="position:absolute;white-space:pre;line-height:22px;font-size:15.75px;font-weight:400;color:#172b4d;top:652px;left:942.80px;">1</span>
<span id="t161" style="position:absolute;white-space:pre;line-height:22px;font-size:15.75px;font-weight:400;color:#172b4d;top:663px;letter-spacing:0.335px;left:1021.76px;">11/Jul/24 2:27 PM</span>
<span id="t162" style="position:absolute;white-space:pre;line-height:22px;font-size:15.75px;font-weight:400;color:#172b4d;top:663px;left:1242.32px;">-</span>
<span id="t163" style="position:absolute;white-space:pre;line-height:22px;font-size:15.75px;font-weight:400;color:#172b4d;top:663px;letter-spacing:0.123px;left:1344.91px;">5/Feb/24 3:44 PM</span>
<span id="t164" style="position:absolute;white-space:pre;line-height:22px;font-size:15.75px;font-weight:400;color:#172b4d;top:663px;letter-spacing:0.266px;left:1510.26px;">23/Jul/24 2:09 PM</span>
<span id="t165" style="position:absolute;white-space:pre;line-height:22px;font-size:15.75px;font-weight:400;color:#172b4d;top:663px;letter-spacing:0.279px;left:1678.79px;">2/May/24 9:41 AM</span>
<span id="t166" style="position:absolute;white-space:pre;line-height:22px;font-size:15.75px;font-weight:400;color:#172b4d;top:663px;letter-spacing:0.293px;left:1840.74px;">27/Mar/24 10:09 AM</span>
</div>
<div class="tr" role="row">
<svg style="position:absolute;left:25px;top:714px" width="18" height="18" viewBox="0 0 18 18"><rect width="18" height="18" rx="2" fill="#2684ff"/><path d="M3.6 8.9 L7.5 12.5 L14.6 5.5" fill="none" stroke="#fff" stroke-width="2.3" stroke-linecap="round" stroke-linejoin="round"/></svg>
<svg style="position:absolute;left:902px;top:719px" width="18" height="14" viewBox="0 0 18 14"><path d="M3 5.5 L9 9.3 L15 5.5" fill="none" stroke="#0065ff" stroke-width="2.2" stroke-linecap="round" stroke-linejoin="round"/></svg>
<div style="position:absolute;left:583px;top:714px;width:197.7px;height:27.5px;background:#ebecf0;border-radius:3.5px"></div>
<span id="t167" style="position:absolute;white-space:pre;line-height:22px;font-size:14px;font-weight:700;color:#5e6c84;top:714px;transform:scaleX(0.9360);transform-origin:0 50%;left:65.70px;">TESTNY-6</span>
<span id="t168" style="position:absolute;white-space:pre;line-height:22px;font-size:15.75px;font-weight:400;color:#172b4d;top:714px;letter-spacing:-0.086px;left:158.60px;">Report</span>
<span id="t169" style="position:absolute;white-space:pre;line-height:22px;font-size:15.75px;font-weight:400;color:#172b4d;top:736px;letter-spacing:-0.035px;left:158.60px;">overview</span>
<span id="t170" style="position:absolute;white-space:pre;line-height:22px;font-size:15.75px;font-weight:400;color:#172b4d;top:714px;letter-spacing:0.392px;left:278.80px;">15/Dec/23</span>
<span id="t171" style="position:absolute;white-space:pre;line-height:22px;font-size:15.75px;font-weight:400;color:#0052cc;top:714px;letter-spacing:0.098px;left:376.20px;">John Smith</span>
<span id="t172" style="position:absolute;white-space:pre;line-height:22px;font-size:15.75px;font-weight:400;color:#0052cc;top:714px;letter-spacing:0.098px;left:481.00px;">John Smith</span>
<span id="t173" style="position:absolute;white-space:pre;line-height:22px;font-size:14px;font-weight:700;color:#42526e;top:716px;transform:scaleX(0.8740);transform-origin:0 50%;left:586.90px;">SELECTED FOR DEVELOPMENT</span>
<span id="t174" style="position:absolute;white-space:pre;line-height:22px;font-size:15.75px;font-weight:400;color:#172b4d;top:714px;letter-spacing:0.630px;left:803.80px;">23/Jul/24</span>
<span id="t175" style="position:absolute;white-space:pre;line-height:22px;font-size:15.75px;font-weight:400;color:#172b4d;top:714px;left:942.80px;">1</span>
<span id="t176" style="position:absolute;white-space:pre;line-height:22px;font-size:15.75px;font-weight:400;color:#172b4d;top:725px;letter-spacing:0.207px;left:1024.55px;">4/Apr/24 1:51 PM</span>
<span id="t177" style="position:absolute;white-space:pre;line-height:22px;font-size:15.75px;font-weight:400;color:#172b4d;top:725px;letter-spacing:0.140px;left:1175.89px;">27/Dec/23 9:18 PM</span>
<span id="t178" style="position:absolute;white-space:pre;line-height:22px;font-size:15.75px;font-weight:400;color:#172b4d;top:725px;letter-spacing:0.137px;left:1335.47px;">15/Dec/23 12:08 PM</span>
<span id="t179" style="position:absolute;white-space:pre;line-height:22px;font-size:15.75px;font-weight:400;color:#172b4d;top:725px;letter-spacing:0.207px;left:1513.05px;">4/Apr/24 1:50 PM</span>
<span id="t180" style="position:absolute;white-space:pre;line-height:22px;font-size:15.75px;font-weight:400;color:#172b4d;top:725px;letter-spacing:0.140px;left:1675.89px;">19/Dec/23 9:25 PM</span>
</div>
</div>
<div style="position:absolute;left:-10px;top:798px;width:1564px;height:15px;background:#c1c1c1;border-radius:7.5px"></div>
<div style="position:absolute;left:1726px;top:806px;width:190px;height:30px;background:#f4f4f5;border-radius:5px"></div>
<div style="position:absolute;left:1021px;top:143px;width:883px;height:636px;border:3px solid #5cbf45"></div>
</body></html>
